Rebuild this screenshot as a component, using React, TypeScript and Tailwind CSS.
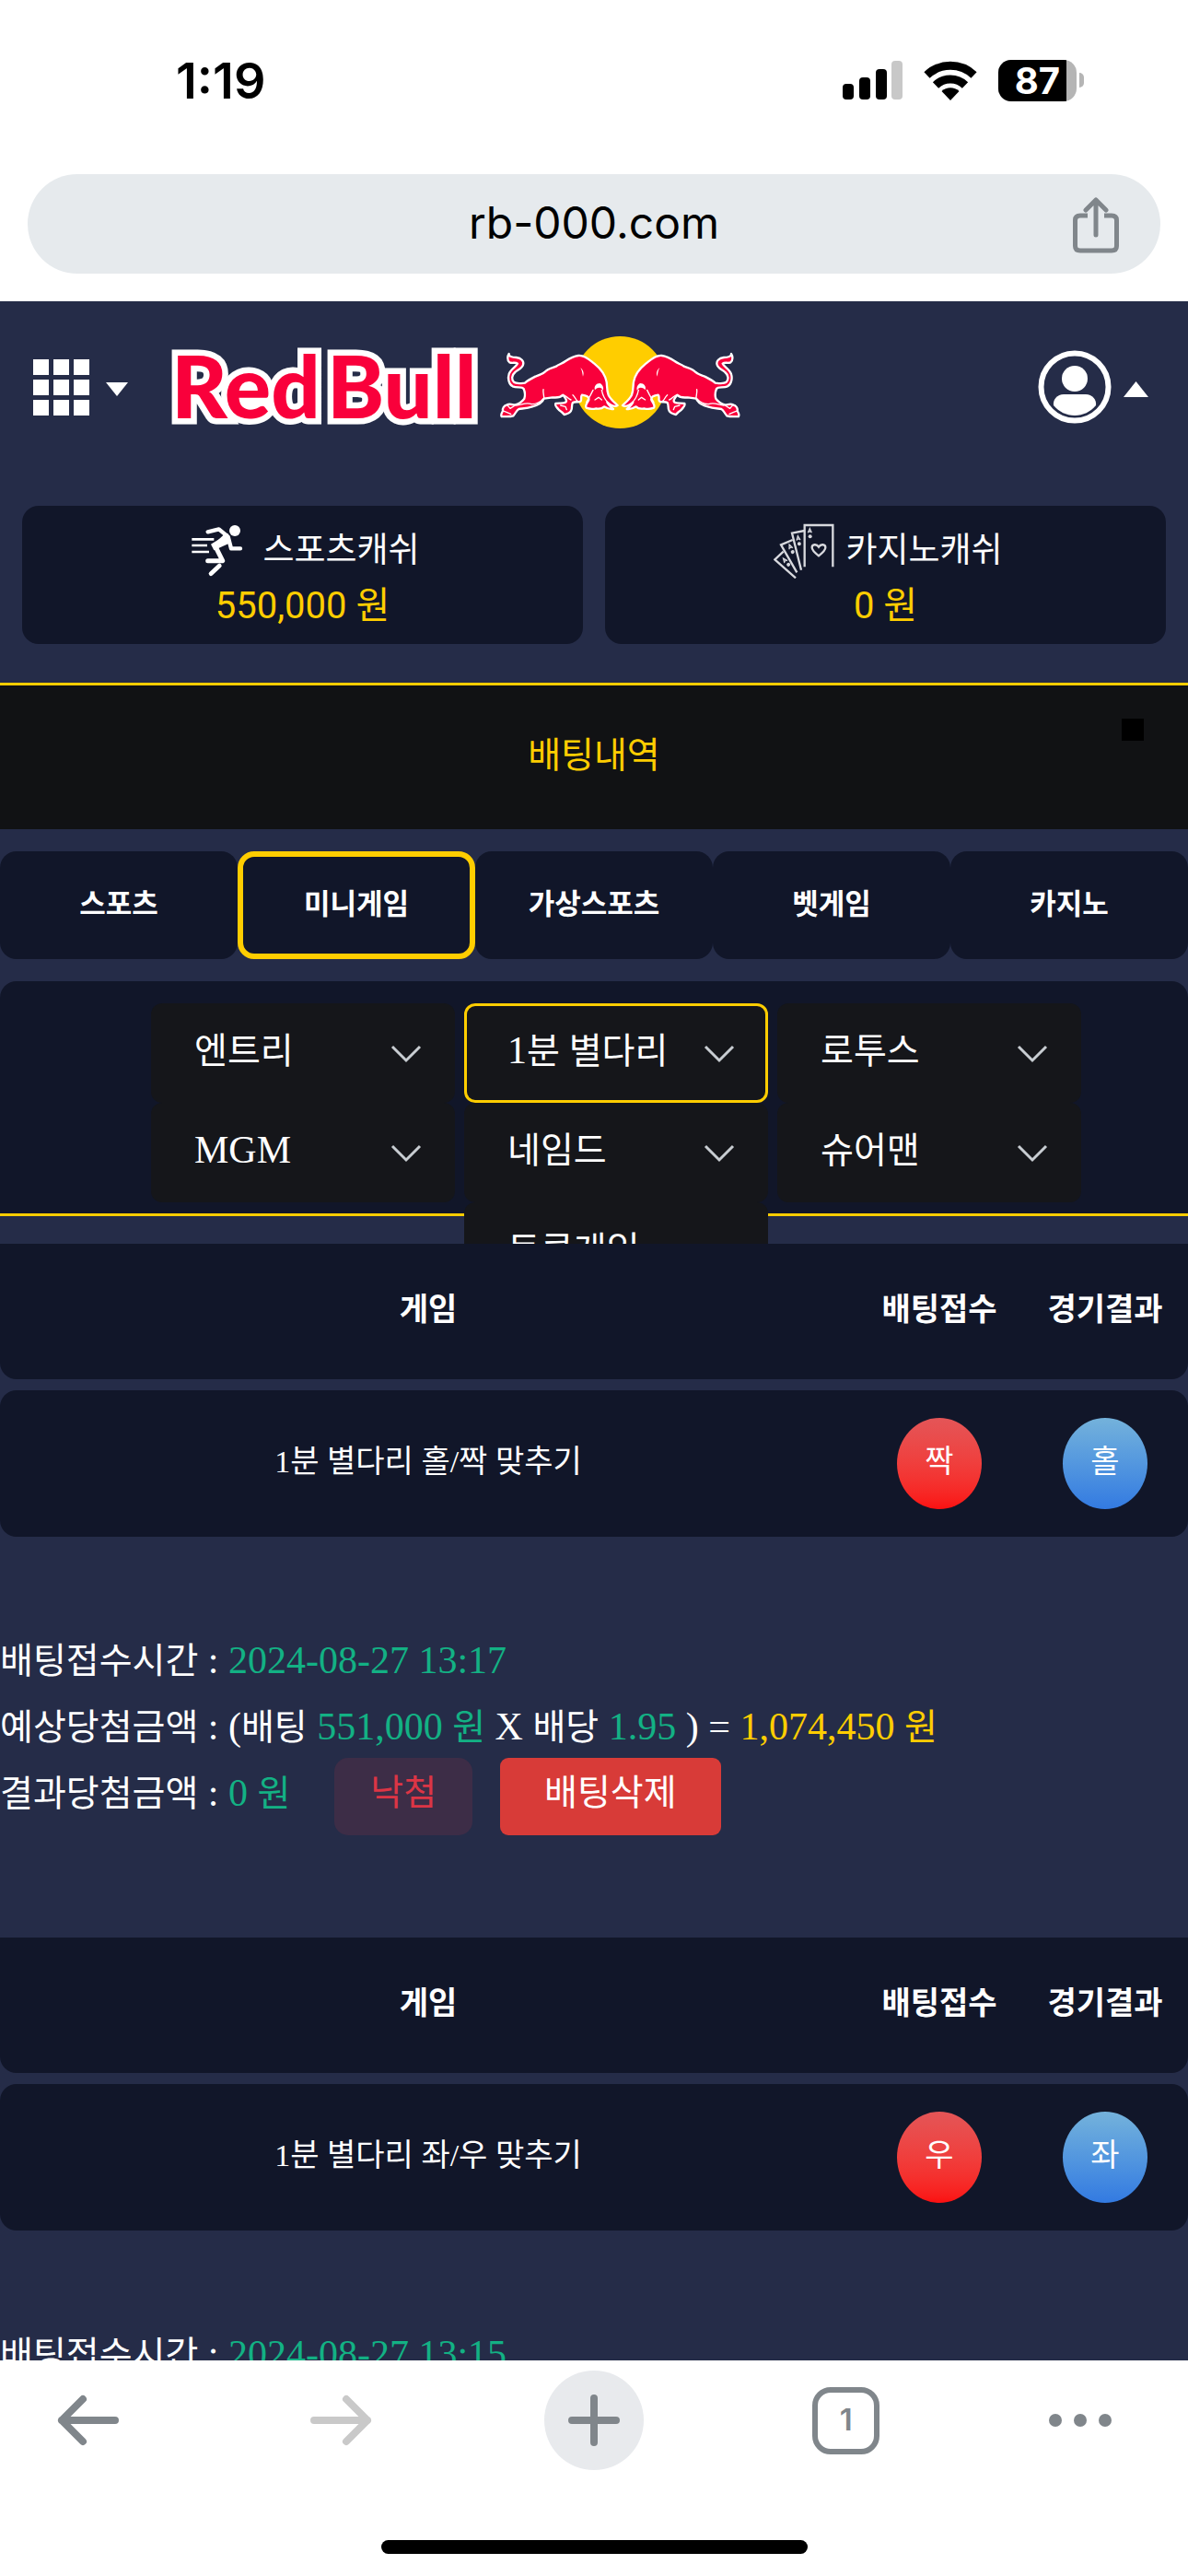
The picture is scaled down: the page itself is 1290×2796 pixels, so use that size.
import type { ReactNode } from "react";

const BULL =
  "M38 72C36 80 48 84 62 84C78 86 88 96 84 108C81 120 66 124 58 132C46 142 46 156 54 164C62 171 78 168 90 167C100 158 112 152 124 146C136 142 146 139 154 132C164 120 180 118 192 113C200 106 212 104 222 96C234 88 246 80 264 78C284 76 300 92 316 104C336 120 352 142 356 164C358 176 356 190 362 206C370 222 382 230 392 240C384 246 370 240 358 230C362 240 370 246 378 252C366 254 356 249 348 244C342 250 334 252 322 250C310 253 300 252 290 248C284 240 294 232 298 222C300 212 290 208 276 206C270 212 276 220 272 226C266 232 254 226 246 231C240 240 246 250 240 258C236 266 228 268 218 270C212 262 206 258 200 254C194 246 186 240 190 234C200 231 214 235 222 230C230 226 220 214 214 206C206 214 196 216 180 214L152 218C146 234 130 240 114 244C98 250 82 250 70 252C62 256 60 266 52 274C40 278 24 276 14 276C10 270 16 262 18 258C16 250 22 240 32 238C42 232 52 240 58 238C70 236 80 228 88 218C92 206 90 196 86 186C80 178 64 184 50 178C36 170 34 150 38 138C44 122 62 114 66 104C58 98 50 104 40 100C30 92 34 78 38 72Z";

function Bull() {
  return (
    <g strokeLinejoin="round" strokeLinecap="round">
      <path d={BULL} fill="#f9003b" stroke="#fff" strokeWidth="7" />
      <g fill="none" stroke="#fff" strokeWidth="4">
        <path d="M150 188C148 200 153 208 152 218" />
        <path d="M62 240C78 240 92 228 112 236C128 236 140 230 150 218" />
        <path d="M246 206C256 214 254 224 264 228" />
        <path d="M214 206C224 206 228 218 240 222" />
        <path d="M18 258L30 262M32 238L42 250L58 240M30 262L44 268" />
        <path d="M206 240L222 244L226 254" />
        <path d="M290 230L304 206L312 190" />
        <path d="M318 222L330 214L340 222" />
        <path d="M340 190C344 210 350 220 360 230" />
      </g>
      <path d="M271 118C279 124 284 134 279 146C277 138 277 126 271 118Z" fill="#fff" />
      <path d="M318 190C314 178 322 168 334 168C344 172 348 184 344 192C340 182 330 178 318 190Z" fill="#fff" />
    </g>
  );
}

function Logo() {
  return (
    <svg viewBox="184 360 624 110" className="h-[110px] w-[624px]" role="img" aria-label="Red Bull">
      <g
        fill="#f9003b"
        stroke="#fff"
        strokeWidth="13"
        paintOrder="stroke"
        className="font-['Lato'] text-[94px] font-black"
      >
        <text x="186" y="454">Red</text>
        <text x="355" y="454">Bull</text>
      </g>
      <g transform="translate(540 360) scale(0.3333)">
        <circle cx="400" cy="165" r="150" fill="#ffcd00" />
        <Bull />
        <g transform="translate(800 0) scale(-1 1)">
          <Bull />
        </g>
      </g>
    </svg>
  );
}

function RunnerIcon() {
  return (
    <svg viewBox="84 52 198 180" className="h-[60px] w-[66px]" fill="none" stroke="#fff" strokeLinejoin="round">
      <circle cx="228" cy="76" r="18" fill="#fff" stroke="none" />
      <path d="M140 80L176 71L206 96L216 134H246" strokeWidth="13" strokeLinecap="round" />
      <path d="M200 92L164 126L188 174H140" strokeWidth="15" strokeLinecap="round" />
      <path d="M206 86L150 120L160 140L208 118Z" fill="#fff" stroke="none" />
      <path d="M178 190L150 216" strokeWidth="14" strokeLinecap="round" />
      <path d="M88 104H160M88 124H138M88 145H144" strokeWidth="8" />
    </svg>
  );
}

function CardsIcon() {
  const faces = [
    { x: 174, y: 76, r: 0 },
    { x: 136, y: 100, r: -8 },
    { x: 110, y: 128, r: -22 },
    { x: 92, y: 172, r: -38 },
  ];
  return (
    <svg viewBox="56 52 198 180" className="h-[60px] w-[66px]" fill="none" stroke="#d8d9de" strokeWidth="7">
      <path d="M157 194V58H249V194" />
      <path d="M157 76L116 84L146 204" />
      <path d="M118 106L80 122L132 212" />
      <path d="M88 144L60 170L128 230" />
      <path d="M203 158C190 148 181 140 181 131C181 120 196 118 203 129C210 118 225 120 225 131C225 140 216 148 203 158Z" />
      {faces.map((f) => (
        <g key={f.x} transform={`translate(${f.x} ${f.y}) rotate(${f.r})`} strokeWidth="4">
          <path d="M-6 7L0 -7L6 7M-4 3H4" />
          <circle cx="1" cy="19" r="6" fill="#d8d9de" stroke="none" />
        </g>
      ))}
    </svg>
  );
}

function StatusBar() {
  return (
    <div className="flex h-[174px] shrink-0 items-center justify-between pr-[113px] pl-[191px] text-black">
      <span className="font-['Inter'] text-[54px] font-semibold">1:19</span>
      <div className="flex items-center gap-[23px]">
        <svg viewBox="0 0 65 42" className="h-[42px] w-[65px]">
          <rect x="0" y="25" width="12" height="17" rx="4" />
          <rect x="18" y="18" width="12" height="24" rx="4" />
          <rect x="36" y="9" width="12" height="33" rx="4" />
          <rect x="53" y="0" width="12" height="42" rx="4" fill="#c8c8c8" />
        </svg>
        <svg viewBox="0 0 58 43" className="h-[43px] w-[58px]" fill="none" stroke="#000" strokeWidth="9">
          <path d="M3.500 15.500A37 37 0 0 1 54.500 15.500" />
          <path d="M13 26.500A23 23 0 0 1 45 26.500" />
          <path d="M29 43L19.500 33A14 14 0 0 1 38.500 33Z" fill="#000" stroke="none" />
        </svg>
        <div className="flex items-center gap-[3px]">
          <div className="h-[45px] w-[85px] overflow-hidden rounded-[14px] bg-[#b5b5b5]">
            <div className="flex h-full w-[74px] items-center justify-end bg-black pr-[7px] font-['Inter'] text-[40px] leading-[45px] font-bold text-white">
              87
            </div>
          </div>
          <div className="h-4 w-[5px] rounded-r-full bg-[#b5b5b5]" />
        </div>
      </div>
    </div>
  );
}

function AddressBar() {
  return (
    <div className="shrink-0 px-[30px] pt-[15px] pb-[30px]">
      <div className="relative h-[108px] rounded-full bg-[#e6eaed]">
        <input
          aria-label="주소"
          readOnly
          value="rb-000.com"
          className="h-full w-full rounded-full bg-transparent pb-1 text-center font-['Inter'] text-[48px] text-black"
        />
        <button aria-label="공유" className="absolute top-[24px] right-[43px]">
          <svg viewBox="0 0 54 64" className="h-[64px] w-[54px]" fill="none" stroke="#80868b" strokeWidth="5">
            <path d="M18 21H10Q4.500 21 4.500 26V54Q4.500 59 10 59H44Q49.500 59 49.500 54V26Q49.500 21 44 21H36" />
            <path d="M27 42V6M16 15L27 4L38 15" strokeLinecap="round" strokeLinejoin="round" />
          </svg>
        </button>
      </div>
    </div>
  );
}

function SiteHeader() {
  return (
    <header className="flex h-[186px] items-center pr-[43px] pl-[36px]">
      <button aria-label="메뉴" className="flex items-center gap-[18px]">
        <svg viewBox="0 0 61 61" className="h-[61px] w-[61px]" fill="#fff">
          {[0, 22, 44].map((y) => [0, 22, 44].map((x) => <rect key={`${x}-${y}`} x={x} y={y} width="17" height="17" />))}
        </svg>
        <svg viewBox="0 0 24 15" className="mt-1 h-[15px] w-[24px]" fill="#fff">
          <path d="M0 0H24L12 15Z" />
        </svg>
      </button>
      <a href="#home" className="-mt-2.5 ml-[45px]">
        <Logo />
      </a>
      <button aria-label="내 계정" className="ml-auto flex items-center gap-[13px]">
        <svg viewBox="0 0 80 80" className="h-[80px] w-[80px]">
          <circle cx="40" cy="40" r="36.500" fill="none" stroke="#fff" strokeWidth="6" />
          <circle cx="40" cy="31" r="14" fill="#fff" />
          <path d="M28 48H52C59 48 64 54 63 60C57 67 49 71 40 71C31 71 23 67 17 60C16 54 21 48 28 48Z" fill="#fff" />
        </svg>
        <svg viewBox="0 0 27 17" className="mt-1 h-[17px] w-[27px]" fill="#fff">
          <path d="M0 17H27L13.500 0Z" />
        </svg>
      </button>
    </header>
  );
}

function CashCard({ icon, title, amount }: { icon: ReactNode; title: string; amount: string }) {
  return (
    <div className="flex-1 rounded-[18px] bg-[#111629] pt-[19px] pb-[11px] text-center font-['Roboto','Noto_Sans_CJK_KR',sans-serif] leading-[60px]">
      <div className="flex items-center justify-center gap-[12px] pl-[6px] text-[37px] text-white">
        {icon}
        <span>{title}</span>
      </div>
      <div className="text-[40px] text-[#ffcd00]">{amount}</div>
    </div>
  );
}

const TABS = ["스포츠", "미니게임", "가상스포츠", "벳게임", "카지노"];

function CategoryTabs() {
  return (
    <nav className="mt-[24px] grid grid-cols-5">
      {TABS.map((tab) => (
        <button
          key={tab}
          className={
            tab === "미니게임"
              ? "h-[117px] rounded-[18px] border-6 border-[#ffcd00] bg-[#111629] text-[31px] font-bold"
              : "h-[117px] rounded-[18px] bg-[#111629] text-[31px] font-bold"
          }
        >
          {tab}
        </button>
      ))}
    </nav>
  );
}

/* Hangul is set slightly smaller than the serif digits beside it. */
function Ko({ children }: { children: ReactNode }) {
  return <span className="text-[39px]">{children}</span>;
}

const GAMES: { name: string; label: ReactNode; active?: boolean; middle?: boolean }[] = [
  { name: "엔트리", label: <Ko>엔트리</Ko> },
  { name: "1분 별다리", label: <>1<Ko>분 별다리</Ko></>, active: true },
  { name: "로투스", label: <Ko>로투스</Ko> },
  { name: "MGM", label: "MGM" },
  { name: "네임드", label: <Ko>네임드</Ko> },
  { name: "슈어맨", label: <Ko>슈어맨</Ko> },
  { name: "토큰게임", label: <Ko>토큰게임</Ko>, middle: true },
];

function GameFilter() {
  return (
    <div className="mt-[24px] h-[255px] rounded-t-[18px] border-b-3 border-[#ffcd00] bg-[#111629] pt-[24px]">
      <div className="ml-[164px] grid w-[1010px] grid-cols-3 gap-x-[10px]">
        {GAMES.map((g) => (
          <button
            key={g.name}
            className={[
              "flex h-[108px] items-center justify-between rounded-[12px] border-3 bg-[#15161a] pr-[33px] pb-1.5 pl-[44px] text-[42px] leading-[72px]",
              g.active ? "border-[#ffcd00]" : "border-transparent",
              g.middle ? "col-start-2" : "",
            ].join(" ")}
          >
            <span>{g.label}</span>
            <svg viewBox="0 0 34 20" className="mt-2 h-[20px] w-[34px]" fill="none" stroke="#c8cdd2" strokeWidth="3">
              <path d="M2 2L17 17L32 2" />
            </svg>
          </button>
        ))}
      </div>
    </div>
  );
}

type Bet = { left: string; pick: string; result: string; time: string };

function BetTable({ bet }: { bet: Bet }) {
  return (
    <table className="relative w-full table-fixed border-separate border-spacing-x-0 border-spacing-y-[12px] text-[34px]">
      <colgroup>
        <col />
        <col className="w-[180px]" />
        <col className="w-[180px]" />
      </colgroup>
      <thead>
        <tr className="h-[147px]">
          <th className="rounded-bl-[18px] bg-[#111629] pb-1 font-bold">게임</th>
          <th className="bg-[#111629] pb-1 font-bold">배팅접수</th>
          <th className="rounded-br-[18px] bg-[#111629] pb-1 font-bold">경기결과</th>
        </tr>
      </thead>
      <tbody>
        <tr className="h-[159px] text-center">
          <td className="rounded-l-[18px] bg-[#111629] pb-1">{bet.left}</td>
          <td className="bg-[#111629]">
            <span className="mx-auto flex h-[99px] w-[92px] items-center justify-center rounded-[50%] bg-linear-to-b from-[#e45557] to-[#fb0f10] pb-1">
              {bet.pick}
            </span>
          </td>
          <td className="rounded-r-[18px] bg-[#111629]">
            <span className="mx-auto flex h-[99px] w-[92px] items-center justify-center rounded-[50%] bg-linear-to-b from-[#74b2db] to-[#337ae1] pb-1">
              {bet.result}
            </span>
          </td>
        </tr>
      </tbody>
    </table>
  );
}

function BetRecord({ bet }: { bet: Bet }) {
  return (
    <section>
      <BetTable bet={bet} />
      <div className="mt-[84px] mb-[99px] text-[42px] leading-[76px] whitespace-nowrap">
        <p className="h-[72px]">
          <Ko>배팅접수시간</Ko> : <span className="text-[#13b184]">{bet.time}</span>
        </p>
        <p className="h-[72px]">
          <Ko>예상당첨금액</Ko> : (<Ko>배팅</Ko> <span className="text-[#13b184]">551,000 <Ko>원</Ko></span> X <Ko>배당</Ko>{" "}
          <span className="text-[#13b184]">1.95</span> ) = <span className="text-[#ffcd00]">1,074,450 <Ko>원</Ko></span>
        </p>
        <div className="flex h-[84px]">
          <p>
            <Ko>결과당첨금액</Ko> : <span className="text-[#13b184]">0 <Ko>원</Ko></span>
          </p>
          <span className="ml-[48px] rounded-[15px] bg-[#3d2d47] px-[39px] text-[39px] text-[#dc3545]">낙첨</span>
          <button className="ml-[30px] rounded-[9px] bg-[#d83b38] px-[48px] pb-2 text-[39px]">배팅삭제</button>
        </div>
      </div>
    </section>
  );
}

const BETS: Bet[] = [
  { left: "1분 별다리 홀/짝 맞추기", pick: "짝", result: "홀", time: "2024-08-27 13:17" },
  { left: "1분 별다리 좌/우 맞추기", pick: "우", result: "좌", time: "2024-08-27 13:15" },
];

function BrowserToolbar() {
  return (
    <footer className="relative h-[234px] shrink-0 bg-white pt-[11px]">
      <nav className="flex items-center justify-between pr-[83px] pl-[42px]">
        <button aria-label="뒤로" className="flex h-[108px] w-[108px] items-center justify-center">
          <svg viewBox="0 0 68 56" className="h-[56px] w-[68px]" fill="none" stroke="#80868b" strokeWidth="8" strokeLinecap="round" strokeLinejoin="round">
            <path d="M63 28H5M28 5L5 28L28 51" />
          </svg>
        </button>
        <button aria-label="앞으로" className="flex h-[108px] w-[108px] items-center justify-center">
          <svg viewBox="0 0 68 56" className="h-[56px] w-[68px]" fill="none" stroke="#c9c9c9" strokeWidth="8" strokeLinecap="round" strokeLinejoin="round">
            <path d="M5 28H63M40 5L63 28L40 51" />
          </svg>
        </button>
        <button aria-label="새 탭" className="flex h-[108px] w-[108px] items-center justify-center rounded-full bg-[#e8eaed]">
          <svg viewBox="0 0 56 56" className="h-[56px] w-[56px]" fill="none" stroke="#80868b" strokeWidth="8" strokeLinecap="round">
            <path d="M28 4V52M4 28H52" />
          </svg>
        </button>
        <button aria-label="탭 보기" className="flex h-[108px] w-[108px] items-center justify-center">
          <span className="flex h-[73px] w-[73px] items-center justify-center rounded-[20px] border-6 border-[#80868b] font-['Inter'] text-[33px] font-semibold text-[#80868b]">
            1
          </span>
        </button>
        <button aria-label="더보기" className="flex h-[108px] w-[68px] items-center justify-between">
          <span className="h-[14px] w-[14px] rounded-full bg-[#80868b]" />
          <span className="h-[14px] w-[14px] rounded-full bg-[#80868b]" />
          <span className="h-[14px] w-[14px] rounded-full bg-[#80868b]" />
        </button>
      </nav>
      <div className="mx-auto mt-[76px] h-[15px] w-[463px] rounded-full bg-black" />
    </footer>
  );
}

export default function App() {
  return (
    <div className="flex h-screen flex-col overflow-hidden bg-white">
      <StatusBar />
      <AddressBar />
      <main className="min-h-0 flex-1 overflow-hidden bg-[#252c48] font-['Liberation_Serif','Noto_Sans_CJK_KR',serif] text-white">
        <SiteHeader />
        <div className="mt-[36px] flex gap-[24px] px-[24px]">
          <CashCard icon={<RunnerIcon />} title="스포츠캐쉬" amount="550,000 원" />
          <CashCard icon={<CardsIcon />} title="카지노캐쉬" amount="0 원" />
        </div>
        <div className="relative mt-[42px] flex h-[159px] items-center justify-center border-t-3 border-[#ffcd00] bg-[#111214] pb-1">
          <h1 className="text-[39px] text-[#ffcd00]">배팅내역</h1>
          <button aria-label="닫기" className="absolute top-[36px] right-[48px] h-[24px] w-[24px] bg-black" />
        </div>
        <CategoryTabs />
        <GameFilter />
        <div className="mt-[18px]">
          {BETS.map((bet) => (
            <BetRecord key={bet.time} bet={bet} />
          ))}
        </div>
      </main>
      <BrowserToolbar />
    </div>
  );
}
